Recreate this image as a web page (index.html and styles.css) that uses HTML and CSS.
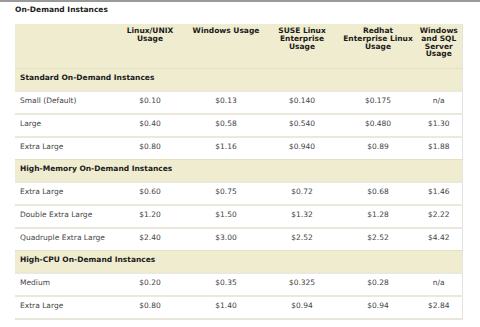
FILE: index.html
```html
<!DOCTYPE html>
<html lang="en">
<head>
    <meta charset="UTF-8">
    <title>On-Demand Instances</title>
    <link rel="stylesheet" href="styles.css">
</head>
<body>
    <div class="page">
        <h1>On-Demand Instances</h1>
        <table class="pricing">
            <colgroup>
                <col class="col-name">
                <col class="col-price">
                <col class="col-price">
                <col class="col-price">
                <col class="col-price">
                <col class="col-last">
            </colgroup>
            <thead>
                <tr>
                    <th></th>
                    <th>Linux/UNIX<br>Usage</th>
                    <th>Windows Usage</th>
                    <th>SUSE Linux<br>Enterprise<br>Usage</th>
                    <th>Redhat<br>Enterprise Linux<br>Usage</th>
                    <th>Windows<br>and SQL<br>Server<br>Usage</th>
                </tr>
            </thead>
            <tbody>
                <tr class="group"><td colspan="6">Standard On-Demand Instances</td></tr>
                <tr><td>Small (Default)</td><td>$0.10</td><td>$0.13</td><td>$0.140</td><td>$0.175</td><td>n/a</td></tr>
                <tr><td>Large</td><td>$0.40</td><td>$0.58</td><td>$0.540</td><td>$0.480</td><td>$1.30</td></tr>
                <tr><td>Extra Large</td><td>$0.80</td><td>$1.16</td><td>$0.940</td><td>$0.89</td><td>$1.88</td></tr>

                <tr class="group"><td colspan="6">High-Memory On-Demand Instances</td></tr>
                <tr><td>Extra Large</td><td>$0.60</td><td>$0.75</td><td>$0.72</td><td>$0.68</td><td>$1.46</td></tr>
                <tr><td>Double Extra Large</td><td>$1.20</td><td>$1.50</td><td>$1.32</td><td>$1.28</td><td>$2.22</td></tr>
                <tr><td>Quadruple Extra Large</td><td>$2.40</td><td>$3.00</td><td>$2.52</td><td>$2.52</td><td>$4.42</td></tr>

                <tr class="group"><td colspan="6">High-CPU On-Demand Instances</td></tr>
                <tr><td>Medium</td><td>$0.20</td><td>$0.35</td><td>$0.325</td><td>$0.28</td><td>n/a</td></tr>
                <tr><td>Extra Large</td><td>$0.80</td><td>$1.40</td><td>$0.94</td><td>$0.94</td><td>$2.84</td></tr>
            </tbody>
        </table>
    </div>
</body>
</html>
```

FILE: styles.css
```css
body {
    margin: 0;
    padding: 0;
    background: #fff;
    font-family: "DejaVu Sans", Verdana, sans-serif;
    font-size: 7.5px;
    color: #444;
}

.page {
    border-top: 2px solid #9a9a9a;
    padding: 3px 15px 0 15px;
}

h1 {
    margin: 0 0 9px 0;
    font-size: 7.5px;
    font-weight: bold;
    color: #1a1a1a;
    line-height: 10px;
}

.pricing {
    border-collapse: collapse;
    table-layout: fixed;
    width: 447px;
    border-right: 1px solid #e2e2e2;
    border-bottom: 2px solid #e8e6d8;
}

.col-name { width: 97px; }
.col-price { width: 76px; }
.col-last { width: 46px; }

.pricing th {
    background: #efecd0;
    color: #1a1a1a;
    font-weight: bold;
    text-align: center;
    vertical-align: top;
    line-height: 7.8px;
    padding: 3px 2px 0 2px;
    height: 41px;
}

.pricing td {
    height: 17px;
    padding: 4px 0 0 0;
    line-height: 9px;
    vertical-align: top;
    text-align: center;
    border-top: 2px solid #ebe9dc;
}

.pricing td:first-child {
    text-align: left;
    padding-left: 5px;
}

.pricing .group td {
    background: #efecd0;
    color: #1a1a1a;
    font-weight: bold;
    border-top: 1px solid #e3e0c4;
}
```
